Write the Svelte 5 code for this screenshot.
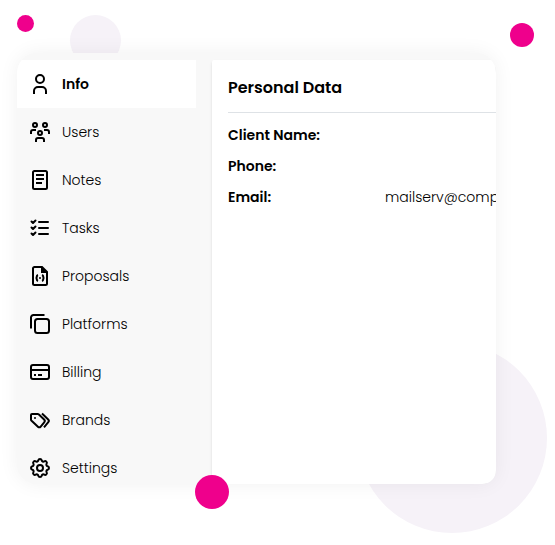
<script lang="ts">
	interface MenuItem {
		id: string;
		label: string;
	}

	const items: MenuItem[] = [
		{ id: 'info', label: 'Info' },
		{ id: 'users', label: 'Users' },
		{ id: 'notes', label: 'Notes' },
		{ id: 'tasks', label: 'Tasks' },
		{ id: 'proposals', label: 'Proposals' },
		{ id: 'platforms', label: 'Platforms' },
		{ id: 'billing', label: 'Billing' },
		{ id: 'brands', label: 'Brands' },
		{ id: 'settings', label: 'Settings' }
	];

	const fields = [
		{ label: 'Client Name:', value: '' },
		{ label: 'Phone:', value: '' },
		{ label: 'Email:', value: 'mailserv@comp' }
	];

	let active = $state('info');
</script>

{#snippet icon(id: string)}
	<svg class="icon" viewBox="0 0 24 24" aria-hidden="true">
		{#if id === 'info'}
			<circle cx="12" cy="7" r="4" />
			<path d="M6 22v-3a4 4 0 0 1 4-4h4a4 4 0 0 1 4 4v3" />
		{:else if id === 'users'}
			<circle cx="7" cy="5" r="2" />
			<circle cx="17" cy="5" r="2" />
			<circle cx="12" cy="13" r="2" />
			<path d="M3 14v-2a2 2 0 0 1 2-2h3M21 14v-2a2 2 0 0 0-2-2h-3" />
			<path d="M8 22v-2a2 2 0 0 1 2-2h4a2 2 0 0 1 2 2v2" />
		{:else if id === 'notes'}
			<rect x="5" y="3" width="14" height="18" rx="1.5" />
			<path d="M8 7h8M8 11h8M8 15h6" />
		{:else if id === 'tasks'}
			<path class="round" d="M11 6H20M11 12H20M11 18H20" />
			<path class="round" d="M3.500 5.500l1.500 1.500L7.500 4.500M3.500 11.500l1.500 1.500L7.500 10.500M3.500 17.500l1.500 1.500L7.500 16.500" />
		{:else if id === 'proposals'}
			<path d="M14 3H6.500A1.500 1.500 0 0 0 5 4.500v15A1.500 1.500 0 0 0 6.500 21h11a1.500 1.500 0 0 0 1.500-1.500V8z" />
			<path class="solid" d="M13 3v6h6l-5-6z" />
			<path d="M10 11c-1.500.500-1.300 1.800-1.500 3 .200 1.200 0 2.500 1.500 3M14 11c1.500.500 1.300 1.800 1.500 3-.200 1.200 0 2.500-1.500 3" />
			<circle class="solid" cx="12" cy="14" r="1" />
		{:else if id === 'platforms'}
			<rect x="7" y="7" width="14" height="14" rx="2.500" />
			<path d="M3 16.500V5.500A2.500 2.500 0 0 1 5.500 3h11" />
		{:else if id === 'billing'}
			<rect x="3" y="5" width="18" height="14" rx="2" />
			<path d="M3 10h18M6 15h2M10 15h4" />
		{:else if id === 'brands'}
			<path d="M4 6h5.600a2 2 0 0 1 1.300.500l5.200 5a2 2 0 0 1 .1 2.800l-3.700 4.500a1.600 1.600 0 0 1-2.300.100l-6.600-6.100a2 2 0 0 1-.6-1.400V7a1 1 0 0 1 1-1z" />
			<path d="M14 5.500l6.200 6a2 2 0 0 1 .1 2.700L16 19.300" />
			<circle class="solid" cx="7" cy="10" r="1" />
		{:else}
			<circle cx="12" cy="12" r="3" />
			<path
				d="M10.325 4.317c.426-1.756 2.924-1.756 3.350 0a1.724 1.724 0 0 0 2.573 1.066c1.543-.940 3.310.826 2.370 2.370a1.724 1.724 0 0 0 1.065 2.572c1.756.426 1.756 2.924 0 3.350a1.724 1.724 0 0 0-1.066 2.573c.940 1.543-.826 3.310-2.370 2.370a1.724 1.724 0 0 0-2.572 1.065c-.426 1.756-2.924 1.756-3.350 0a1.724 1.724 0 0 0-2.573-1.066c-1.543.940-3.310-.826-2.370-2.370a1.724 1.724 0 0 0-1.065-2.572c-1.756-.426-1.756-2.924 0-3.350a1.724 1.724 0 0 0 1.066-2.573c-.940-1.543.826-3.310 2.370-2.370c1 .608 2.296.070 2.572-1.065z"
			/>
		{/if}
	</svg>
{/snippet}

<div class="stage">
	<span class="dot lilac small"></span>
	<span class="dot lilac large"></span>
	<span class="dot pink one"></span>
	<span class="dot pink two"></span>

	<main class="card">
		<nav class="menu" aria-label="Client sections">
			{#each items as item (item.id)}
				<button
					type="button"
					class="item"
					class:active={active === item.id}
					aria-current={active === item.id ? 'page' : undefined}
					onclick={() => (active = item.id)}
				>
					{@render icon(item.id)}
					<span>{item.label}</span>
				</button>
			{/each}
		</nav>

		<section class="panel">
			<h2>Personal Data</h2>
			<dl>
				{#each fields as field (field.label)}
					<div class="row">
						<dt>{field.label}</dt>
						<dd>{field.value}</dd>
					</div>
				{/each}
			</dl>
		</section>
	</main>

	<span class="dot pink three"></span>
</div>

<style>
	:global(body) {
		margin: 0;
		background: #fff;
	}

	.stage {
		position: relative;
		display: flex;
		box-sizing: border-box;
		height: 100vh;
		padding: 53px 59px 61px 17px;
		overflow: hidden;
		font-family: Poppins, Inter, sans-serif;
		font-size: 14px;
		color: #000;
	}

	.dot {
		position: absolute;
		border-radius: 50%;
	}

	.pink {
		background: #ef008c;
	}

	.lilac {
		background: #f6f2f8;
	}

	.small {
		top: 15px;
		left: 70px;
		width: 51px;
		height: 51px;
	}

	.large {
		right: 8px;
		bottom: 12px;
		width: 190px;
		height: 190px;
	}

	.one {
		top: 15px;
		left: 17px;
		width: 17px;
		height: 17px;
	}

	.two {
		top: 23px;
		right: 21px;
		width: 24px;
		height: 24px;
	}

	.three {
		bottom: 36px;
		left: 195px;
		width: 34px;
		height: 34px;
	}

	.card {
		position: relative;
		display: flex;
		flex: 1;
		gap: 16px;
		box-sizing: border-box;
		min-width: 0;
		padding-top: 7px;
		overflow: hidden;
		border-radius: 20px 20px 14px 20px;
		background: #f8f8f8;
		box-shadow: 0 0 20px rgb(0 0 0 / 0.06);
	}

	.menu {
		display: flex;
		flex: 0 0 179px;
		flex-direction: column;
	}

	.item {
		display: flex;
		flex-shrink: 0;
		align-items: center;
		gap: 10px;
		height: 48px;
		padding: 0 11px;
		border: none;
		background: none;
		color: inherit;
		font: inherit;
		font-weight: 300;
		text-align: left;
		cursor: pointer;
	}

	.item.active {
		background: #fff;
		font-weight: 600;
	}

	.icon {
		flex-shrink: 0;
		width: 24px;
		height: 24px;
		fill: none;
		stroke: #000;
		stroke-width: 2;
	}

	.icon .round {
		stroke-linecap: round;
		stroke-linejoin: round;
	}

	.icon .solid {
		fill: #000;
		stroke: none;
	}

	.panel {
		flex: 1;
		min-width: 0;
		padding-left: 16px;
		overflow: hidden;
		border-top-left-radius: 2px;
		background: #fff;
		box-shadow: 0 2px 3px rgb(0 0 0 / 0.12);
	}

	h2 {
		margin: 0;
		padding: 16px 0 12px;
		border-bottom: 1px solid #dee2e6;
		font-size: 16px;
		font-weight: 600;
		line-height: 24px;
	}

	dl {
		display: flex;
		flex-direction: column;
		gap: 10px;
		margin: 12px 0 0;
	}

	.row {
		display: flex;
		line-height: 21px;
	}

	dt {
		flex: 0 0 157px;
		font-weight: 600;
	}

	dd {
		margin: 0;
		font-weight: 300;
		white-space: nowrap;
	}
</style>
